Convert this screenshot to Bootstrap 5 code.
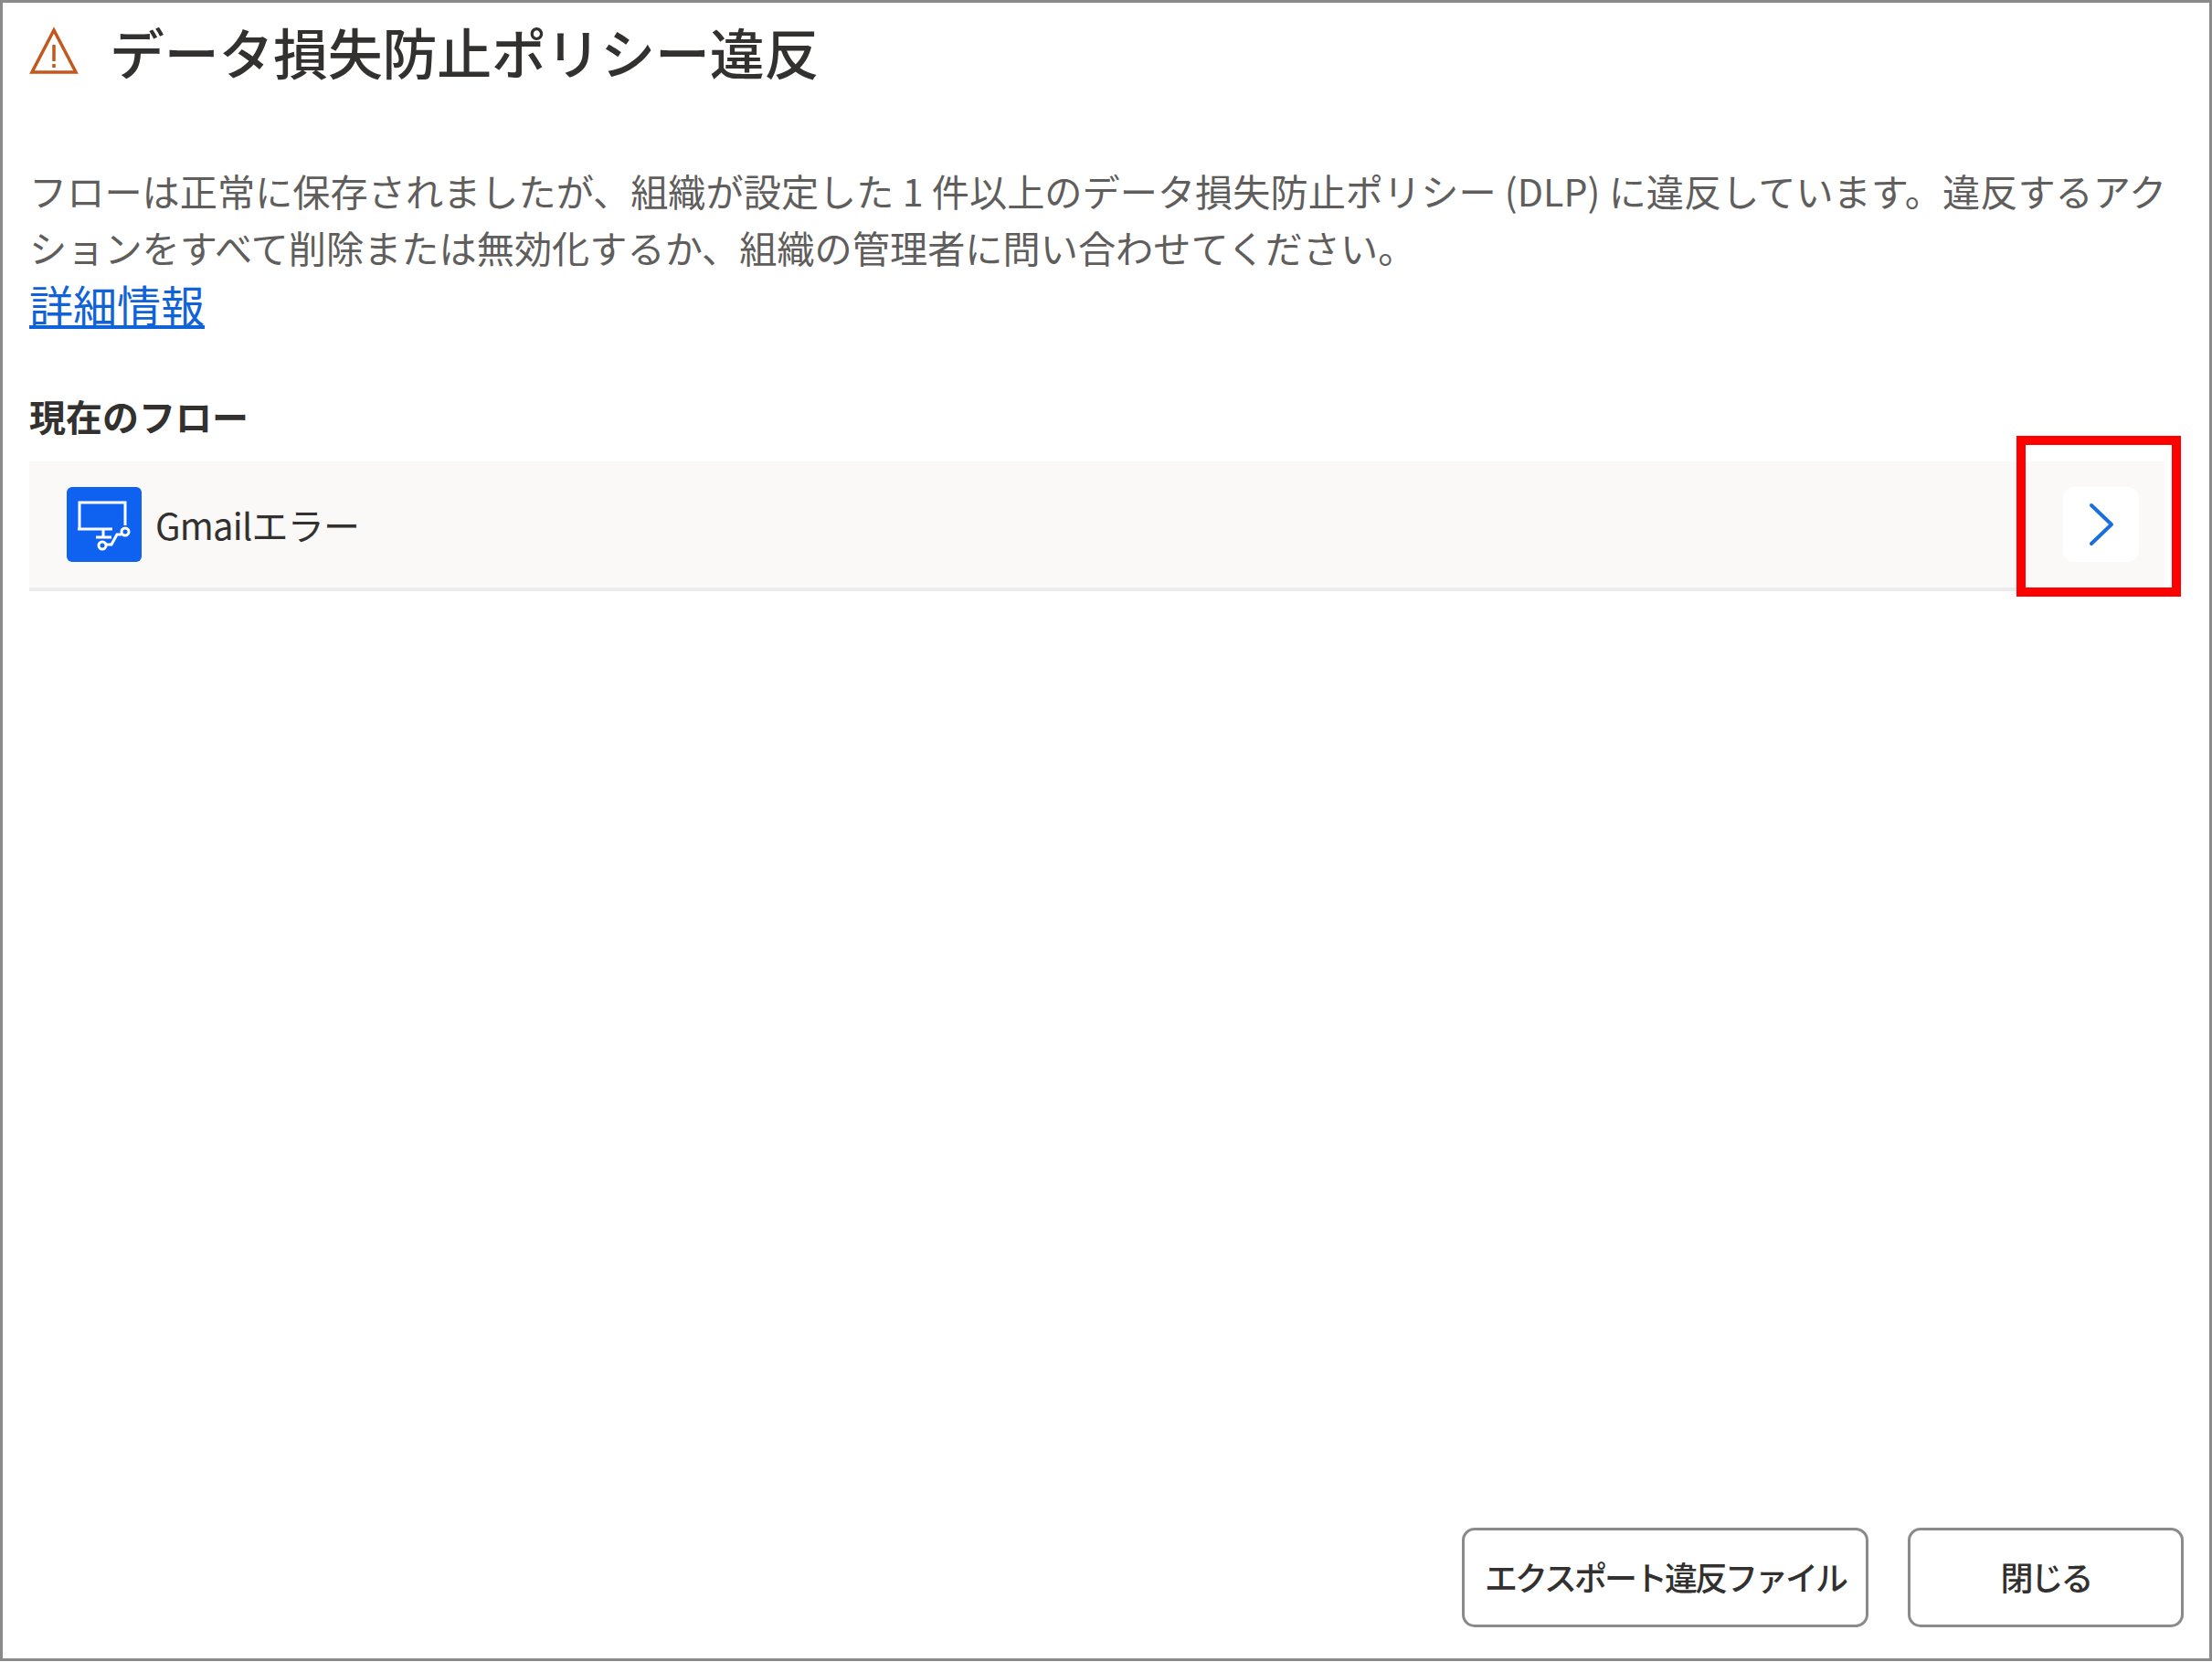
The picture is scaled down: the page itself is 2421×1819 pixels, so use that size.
<!DOCTYPE html>
<html lang="ja">
<head>
    <meta charset="UTF-8">
    <title>データ損失防止ポリシー違反</title>
    <link rel="stylesheet" href="https://cdn.jsdelivr.net/npm/bootstrap@5.3.0/dist/css/bootstrap.min.css">
    <style>
        html, body {
            height: 100%;
        }

        body {
            font-family: "Noto Sans CJK JP", "Liberation Sans", sans-serif;
            background-color: #fff;
            color: #323130;
        }

        .dlp-frame {
            height: 1818px;
            border: 3px solid #8a8a8a;
            padding: 0 28px 34px 29px;
        }

        .dlp-head {
            height: 106px;
            gap: 34px;
        }

        .dlp-title {
            font-size: 60px;
            font-weight: 500;
            line-height: 1;
            margin: 0;
            letter-spacing: -.3px;
        }

        .dlp-message {
            margin: 68px 0 0;
            font-size: 41.2px;
            line-height: 62px;
            color: #605e5c;
            width: 2345px;
        }

        .dlp-more {
            font-size: 48px;
            line-height: 62px;
            color: #0f62d8;
        }

        .dlp-label {
            margin: 58px 0 0;
            font-size: 40px;
            font-weight: 700;
            line-height: 62px;
            height: 81px;
            color: #323130;
        }

        .flow-row {
            width: 2337px;
            height: 142px;
            background-color: #faf9f8;
            border-bottom: 4px solid #ebebeb;
            padding: 0 28px 0 41px;
        }

        .flow-icon {
            width: 82px;
            height: 82px;
            background-color: #0f62f0;
            border-radius: 6px;
        }

        .flow-name {
            font-size: 40px;
            margin-left: 15px;
            letter-spacing: -.8px;
        }

        .flow-open {
            width: 83px;
            height: 82px;
            background-color: #fff;
            border-radius: 12px;
        }

        .red-mark {
            position: absolute;
            left: 2204px;
            top: 474px;
            width: 180px;
            height: 176px;
            border: 10px solid #f00;
        }

        .dlp-footer {
            gap: 43px;
        }

        .dlp-btn {
            height: 109px;
            font-size: 36px;
            font-weight: 500;
            letter-spacing: -3px;
            white-space: nowrap;
            color: #323130;
            background-color: #fff;
            border: 3px solid #8a8a8a;
            border-radius: 14px;
            padding: 0 0 3px;
        }

        .btn-export {
            width: 445px;
        }

        .btn-close-dlg {
            width: 302px;
        }
    </style>
</head>
<body>
<div class="dlp-frame position-relative d-flex flex-column">
    <div class="dlp-head d-flex align-items-center">
        <svg width="54" height="54" viewBox="0 0 54 54" fill="none" stroke="#c4571b" stroke-width="3.5">
            <path d="M27 4 L51 50 H3 Z" stroke-linejoin="miter"/>
            <path d="M27 20 V38"/>
            <path d="M27 41 V45"/>
        </svg>
        <h1 class="dlp-title">データ損失防止ポリシー違反</h1>
    </div>

    <p class="dlp-message">フローは正常に保存されましたが、組織が設定した 1 件以上のデータ損失防止ポリシー (DLP) に違反しています。違反するアクションをすべて削除または無効化するか、組織の管理者に問い合わせてください。<br><a class="dlp-more" href="#">詳細情報</a></p>

    <div class="dlp-label">現在のフロー</div>

    <div class="flow-row d-flex align-items-center">
        <div class="flow-icon flex-shrink-0">
            <svg class="d-block" width="82" height="82" viewBox="0 0 82 82" fill="none" stroke="#fff" stroke-width="3">
                <path d="M14 46 V17 H64 V42"/>
                <path d="M12 46 H50"/>
                <path d="M40 46 V55 M32 55 H49"/>
                <circle cx="64" cy="49" r="4"/>
                <circle cx="39" cy="64" r="4"/>
                <path d="M43 63 H49 L55 52 H60"/>
            </svg>
        </div>
        <span class="flow-name">Gmailエラー</span>
        <button class="flow-open ms-auto d-flex align-items-center justify-content-center border-0" type="button" aria-label="開く">
            <svg width="28" height="48" viewBox="0 0 28 48" fill="none" stroke="#1a6fe0" stroke-width="4" stroke-linecap="round" stroke-linejoin="round">
                <path d="M3 3 L25 24 L3 45"/>
            </svg>
        </button>
    </div>

    <div class="dlp-footer d-flex justify-content-end mt-auto">
        <button class="dlp-btn btn-export" type="button">エクスポート違反ファイル</button>
        <button class="dlp-btn btn-close-dlg" type="button">閉じる</button>
    </div>

    <div class="red-mark"></div>
</div>
<script src="https://cdn.jsdelivr.net/npm/bootstrap@5.3.0/dist/js/bootstrap.bundle.min.js"></script>
</body>
</html>
